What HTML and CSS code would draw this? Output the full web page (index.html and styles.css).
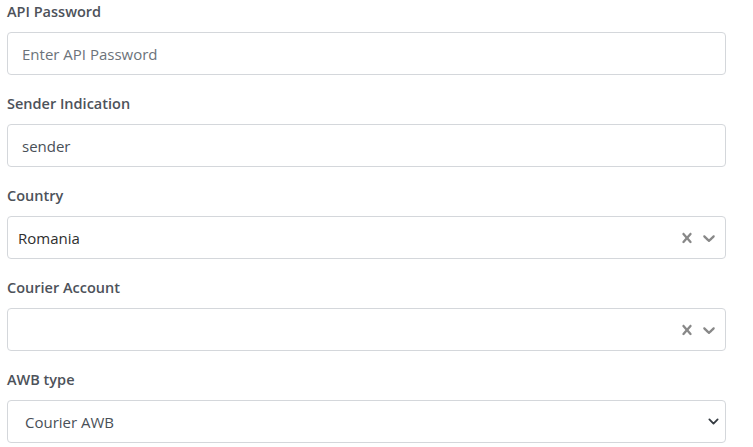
FILE: index.html
```html
<!DOCTYPE html>
<html lang="en">
<head>
    <meta charset="UTF-8">
    <meta name="viewport" content="width=device-width, initial-scale=1.0">
    <title>Courier settings</title>
    <link rel="stylesheet" href="styles.css">
</head>
<body>
    <form class="settings">
        <div class="group">
            <label class="label" for="apiPassword">API Password</label>
            <input type="password" id="apiPassword" class="input" placeholder="Enter API Password">
        </div>

        <div class="group">
            <label class="label" for="sender">Sender Indication</label>
            <input type="text" id="sender" class="input" value="sender">
        </div>

        <div class="group">
            <label class="label">Country</label>
            <div class="picker">
                <div class="picker-value">Romania</div>
                <div class="picker-icons">
                    <svg class="icon" viewBox="0 0 20 20" width="20" height="20"><path d="M14.348 14.849c-0.469 0.469-1.229 0.469-1.697 0l-2.651-3.030-2.651 3.029c-0.469 0.469-1.229 0.469-1.697 0-0.469-0.469-0.469-1.229 0-1.697l2.758-3.15-2.759-3.152c-0.469-0.469-0.469-1.228 0-1.697s1.228-0.469 1.697 0l2.652 3.031 2.651-3.031c0.469-0.469 1.228-0.469 1.697 0s0.469 1.229 0 1.697l-2.758 3.152 2.758 3.15c0.469 0.469 0.469 1.229 0 1.698z"/></svg>
                    <svg class="icon" viewBox="0 0 20 20" width="20" height="20"><path d="M4.516 7.548c0.436-0.446 1.043-0.481 1.576 0l3.908 3.747 3.908-3.747c0.533-0.481 1.141-0.446 1.574 0 0.436 0.445 0.408 1.197 0 1.615-0.406 0.418-4.695 4.502-4.695 4.502-0.217 0.223-0.502 0.335-0.787 0.335s-0.57-0.112-0.789-0.335c0 0-4.287-4.084-4.695-4.502s-0.436-1.17 0-1.615z"/></svg>
                </div>
            </div>
        </div>

        <div class="group">
            <label class="label">Courier Account</label>
            <div class="picker">
                <div class="picker-value"></div>
                <div class="picker-icons">
                    <svg class="icon" viewBox="0 0 20 20" width="20" height="20"><path d="M14.348 14.849c-0.469 0.469-1.229 0.469-1.697 0l-2.651-3.030-2.651 3.029c-0.469 0.469-1.229 0.469-1.697 0-0.469-0.469-0.469-1.229 0-1.697l2.758-3.15-2.759-3.152c-0.469-0.469-0.469-1.228 0-1.697s1.228-0.469 1.697 0l2.652 3.031 2.651-3.031c0.469-0.469 1.228-0.469 1.697 0s0.469 1.229 0 1.697l-2.758 3.152 2.758 3.15c0.469 0.469 0.469 1.229 0 1.698z"/></svg>
                    <svg class="icon" viewBox="0 0 20 20" width="20" height="20"><path d="M4.516 7.548c0.436-0.446 1.043-0.481 1.576 0l3.908 3.747 3.908-3.747c0.533-0.481 1.141-0.446 1.574 0 0.436 0.445 0.408 1.197 0 1.615-0.406 0.418-4.695 4.502-4.695 4.502-0.217 0.223-0.502 0.335-0.787 0.335s-0.57-0.112-0.789-0.335c0 0-4.287-4.084-4.695-4.502s-0.436-1.17 0-1.615z"/></svg>
                </div>
            </div>
        </div>

        <div class="group">
            <label class="label" for="awbType">AWB type</label>
            <div class="select-wrap">
                <select id="awbType" class="select">
                    <option>Courier AWB</option>
                </select>
                <svg class="select-arrow" viewBox="0 0 16 16" width="11" height="11"><path d="M2 5l6 6 6-6" fill="none" stroke="#343a40" stroke-width="2.6" stroke-linecap="round" stroke-linejoin="round"/></svg>
            </div>
        </div>
    </form>
</body>
</html>
```

FILE: styles.css
```css
* {
    margin: 0;
    padding: 0;
    box-sizing: border-box;
}

body {
    font-family: 'Open Sans', 'Noto Sans', sans-serif;
    font-size: 15px;
    color: #495057;
    background: white;
    padding: 1px 27px 0 7px;
}

.group {
    margin-bottom: 18px;
}

.label {
    display: block;
    font-size: 14.5px;
    font-weight: 600;
    line-height: 21px;
    color: #4d525a;
    margin-bottom: 10px;
}

.input,
.select,
.picker {
    display: block;
    width: 100%;
    height: 43px;
    border: 1px solid #d4d7db;
    border-radius: 4px;
    background: white;
    font-family: inherit;
    font-size: 15px;
    color: #495057;
}

.input {
    padding: 0 14px;
}

.input::placeholder {
    color: #6c737a;
}

.input:focus,
.select:focus {
    outline: none;
}

.picker {
    display: flex;
    align-items: center;
    padding-left: 10px;
    color: #2e2e2e;
}

.picker-value {
    flex: 1;
}

.picker-icons {
    display: flex;
    align-items: center;
    gap: 2px;
    padding-right: 6px;
}

.icon {
    fill: #888888;
}

.select-wrap {
    position: relative;
}

.select {
    appearance: none;
    padding: 0 36px 0 17px;
}

.select-arrow {
    position: absolute;
    right: 7px;
    top: 16px;
}
```
